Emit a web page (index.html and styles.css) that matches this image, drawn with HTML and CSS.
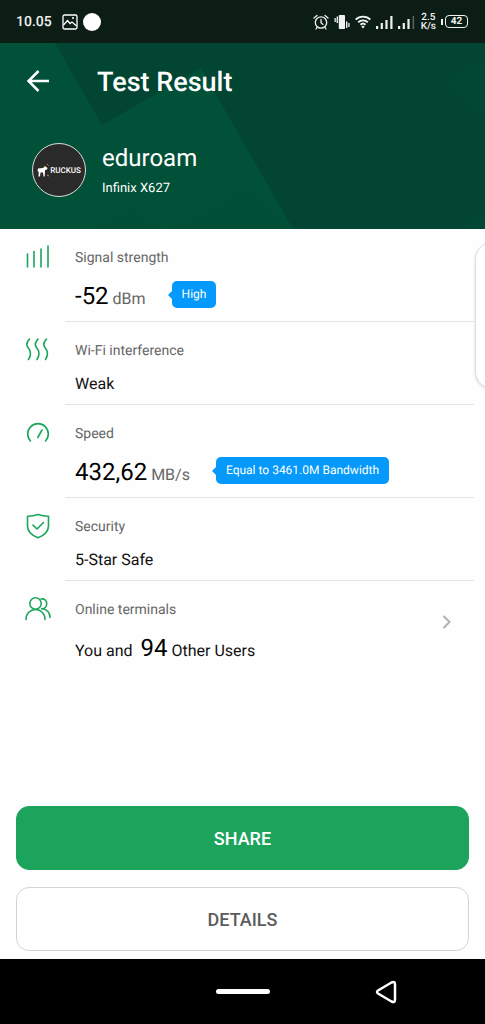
FILE: index.html
```html
<!DOCTYPE html>
<html lang="en">
<head>
<meta charset="utf-8">
<meta name="viewport" content="width=device-width, initial-scale=1">
<title>Test Result</title>
<link rel="stylesheet" href="styles.css">
</head>
<body>
<div class="app">
  <div class="status">
    <span class="clock">10.05</span>
    <svg class="pic" width="16" height="16" viewBox="0 0 16 16" fill="none" stroke="#fff"><rect x="1" y="1" width="14" height="14" rx="1.5" stroke-width="1.3"/><path d="M1.5 11 5.5 6.500l2.500 3 2-1.500 4.500 4" stroke-width="1.3"/><circle cx="11" cy="4" r="1" fill="#fff" stroke="none"/></svg>
    <span class="dot"></span>
    <span class="spacer"></span>
    <svg width="16" height="16" viewBox="0 0 16 16" fill="none" stroke="#f0f2f1" stroke-width="1.3" stroke-linecap="round"><circle cx="8" cy="8.500" r="5.700"/><path d="M8 5.500v3.300l2 1.600M1 4 4 1.500M15 4l-3-2.500M4 13.500 3 15M12 13.500l1 1.500"/></svg>
    <svg width="16" height="16" viewBox="0 0 16 16" fill="#f0f2f1"><rect x="4.800" y="1" width="6.200" height="14" rx=".8"/><path d="M2.600 2.500H4V9H2.600zM.5 4h1.300v4H.5zM12 7.500h1.400V14H12zM14.300 9h1.300v4h-1.300z"/></svg>
    <svg width="16" height="14" viewBox="0 0 16 14" fill="none" stroke="#f0f2f1" stroke-width="1.900"><path d="M.7 4.600a10.400 10.400 0 0 1 14.600 0M3.200 7.300a6.900 6.900 0 0 1 9.600 0M5.500 9.800a3.600 3.600 0 0 1 5 0"/><path d="m8 13.500-1.700-2a2.500 2.500 0 0 1 3.400 0z" fill="#f0f2f1" stroke="none"/></svg>
    <svg width="17" height="14" viewBox="0 0 17 14" fill="#f0f2f1"><path d="M0 11h2.200v3H0zM4.700 8h2.200v6H4.700zM9.400 5h2.200v9H9.400zM14.300 1h2.200v13h-2.200z"/></svg>
    <svg width="17" height="14" viewBox="0 0 17 14" fill="#f0f2f1"><path d="M0 11h2.200v3H0zM4.700 8h2.200v6H4.700zM9.400 4h2.200v10H9.400z"/><path d="M14.600 1h1.500v13h-1.500z" opacity=".35"/></svg>
    <span class="rate">2.5<br>K/s</span>
    <span class="battery"><span class="cell">42</span></span>
  </div>

  <header class="header">
    <svg class="facets" viewBox="0 0 485 186" preserveAspectRatio="none" aria-hidden="true">
      <path fill="#005137" d="M0 0h55l47 82 99-57 92 161H0z"/>
      <path fill="#004e36" d="m90 186 46-25 24 25zM165 186l85-45 43 45z" opacity=".6"/>
      <path fill="#014a35" d="m445 38 40-24v60zM455 186l30-18v18z" opacity=".6"/>
    </svg>
    <div class="titlebar">
      <button class="back" type="button" aria-label="Back"><svg width="24" height="24" viewBox="0 0 24 24" fill="none" stroke="#fff" stroke-width="2.500"><path d="M24 11H3.500M13.500 1l-10 10 10 10"/></svg></button>
      <h1>Test Result</h1>
    </div>
    <div class="network">
      <div class="logo">
        <svg width="12" height="13" viewBox="0 0 12 13"><path fill="#fff" d="M1 4.500 6 4l2-2 2.500 2-.5 1.500-2 .5-.3 6.500H6.500L6 8.500H3.500L3 12.500H1.500L1.700 8 .5 7z"/><path fill="none" stroke="#c98a2b" d="M10 0l1.500 1.500M10 11l2 1M8.500 2 7 3.500"/></svg>
        <span>RUCKUS</span>
      </div>
      <div>
        <div class="ssid">eduroam</div>
        <div class="device">Infinix X627</div>
      </div>
    </div>
  </header>

  <main class="results">
    <section class="row">
      <svg class="icon" width="26" height="26" viewBox="0 0 26 26"><path d="M2.500 10v13M9 7.500V23M16 5v18M23 2v21"/></svg>
      <div class="info">
        <h2>Signal strength</h2>
        <div class="value"><span><strong>-52</strong> <small>dBm</small></span><span class="tag">High</span></div>
      </div>
    </section>
    <section class="row">
      <svg class="icon" width="26" height="26" viewBox="0 0 26 26"><path d="M4.500 2C0 7 2 9.500 4 12s2 7-.5 10.500M13 2c-4.500 5-2.500 7.500-.5 10s2 7-.5 10.500M21.500 2c-4.500 5-2.500 7.500-.5 10s2 7-.5 10.500"/></svg>
      <div class="info">
        <h2>Wi-Fi interference</h2>
        <div class="value">Weak</div>
      </div>
    </section>
    <section class="row">
      <svg class="icon" width="26" height="26" viewBox="0 0 26 26"><path d="M5.500 21a10.300 10.300 0 1 1 15 0M17 10l-4.200 7.500"/></svg>
      <div class="info">
        <h2>Speed</h2>
        <div class="value"><span><strong>432,62</strong> <small>MB/s</small></span><span class="tag">Equal to 3461.0M Bandwidth</span></div>
      </div>
    </section>
    <section class="row">
      <svg class="icon" width="26" height="26" viewBox="0 0 26 26"><path d="M13 1.500c3 1 6.500 1.600 10.500 1.700V13c0 6-4.500 9.500-10.500 11.800C7 22.500 2.500 19 2.500 13V3.200C6.500 3.100 10 2.500 13 1.500zM8 12.200l4 3.800 6.500-6.500"/></svg>
      <div class="info">
        <h2>Security</h2>
        <div class="value">5-Star Safe</div>
      </div>
    </section>
    <section class="row">
      <svg class="icon" width="26" height="26" viewBox="0 0 26 26"><circle cx="10.500" cy="7.500" r="5.700"/><path d="M1 23.500c0-6 4.200-10 9.500-10s9.500 4 9.500 10M16 3c4-.8 5.700 2 5.700 4.700 0 3-2.200 5.100-5 5.100 5.300.7 8.300 4.200 8.300 8.700"/></svg>
      <div class="info">
        <h2>Online terminals</h2>
        <div class="value"><span>You and&nbsp; <strong>94</strong> Other Users</span></div>
      </div>
      <a class="more" href="#terminals" aria-label="Show online terminals"><svg width="10" height="16" viewBox="0 0 10 16" fill="none" stroke="#b0b0b0" stroke-width="2"><path d="m1.500 2 6 6-6 6"/></svg></a>
    </section>
    <div class="edge-panel"></div>
  </main>

  <div class="actions">
    <button class="btn primary" type="button">SHARE</button>
    <button class="btn" type="button">DETAILS</button>
  </div>

  <nav class="navbar">
    <button class="home" type="button" aria-label="Home"><span></span></button>
    <button class="prev" type="button" aria-label="System back"><svg width="24" height="26" viewBox="0 0 24 26" fill="none" stroke="#fff" stroke-width="2.500" stroke-linejoin="round"><path d="M3 11.500 16.500 3.500Q20 2 20 5v16q0 3-3.500 1.500L3 14.500q-2-1.500 0-3z"/></svg></button>
  </nav>
</div>
</body>
</html>
```
FILE: styles.css
```css
* { box-sizing: border-box; }

body {
  margin: 0;
  font-family: Roboto, "Liberation Sans", sans-serif;
  text-rendering: geometricPrecision;
  background: #fefefe;
  color: #111;
}

button {
  font: inherit;
  padding: 0;
  border: 0;
  background: none;
}

svg { display: block; flex: none; }

.app {
  display: flex;
  flex-direction: column;
  min-height: 100vh;
}

.status {
  display: flex;
  align-items: center;
  gap: 5px;
  height: 43px;
  padding: 0 17px 0 16px;
  background: #0c1d16;
  color: #f0f2f1;
}

.clock { font-size: 14px; font-weight: 500; margin-right: 5px; }
.dot { width: 18px; height: 18px; border-radius: 50%; background: #fff; }
.spacer { flex: 1; }
.rate { font-size: 10px; line-height: 9px; font-weight: 500; text-align: center; margin-left: 1px; }

.battery { display: flex; align-items: center; gap: 2px; }
.battery::before { content: ""; width: 2px; height: 6px; background: #f0f2f1; }

.cell {
  width: 23px;
  border: 1px solid #f0f2f1;
  border-radius: 4px;
  font-size: 10px;
  line-height: 11px;
  font-weight: 700;
  text-align: center;
}

.header {
  position: relative;
  padding: 19px 16px 31px 25px;
  background: #024532;
  color: #fff;
}

.facets { position: absolute; inset: 0; width: 100%; height: 100%; }
.titlebar, .network { position: relative; display: flex; align-items: center; }
.titlebar { gap: 48px; height: 40px; }

h1 { margin: 0; font-size: 27px; line-height: 40px; font-weight: 500; }

.network { gap: 16px; padding: 40px 0 0 7px; }

.logo {
  display: flex;
  align-items: center;
  justify-content: center;
  gap: 1px;
  width: 54px;
  height: 54px;
  border: 1px solid #ddd;
  border-radius: 50%;
  background: #2b2a2b;
  font-size: 8px;
  font-weight: 500;
}

.ssid { font-size: 24px; line-height: 32px; }
.device { font-size: 13px; line-height: 18px; margin-top: 6px; }

.results { position: relative; flex: 1; overflow: hidden; }
.row { display: flex; position: relative; padding-right: 11px; }

.icon {
  margin: 15px 14px 0 25px;
  fill: none;
  stroke: #1ca65b;
  stroke-width: 1.600;
  stroke-linecap: round;
  stroke-linejoin: round;
}

.info {
  flex: 1;
  padding: 19px 0 9px 10px;
  border-bottom: 1px solid #e4e4e4;
}

.row:last-of-type .info { border-bottom: 0; }

h2 {
  margin: 0 0 12px;
  font-size: 14px;
  line-height: 20px;
  font-weight: 400;
  color: #666;
}

.value { display: flex; align-items: center; font-size: 16px; line-height: 22px; }
.value strong { font-size: 24px; line-height: 32px; font-weight: 400; color: #000; }
.value small { font-size: 16px; color: #666; }

.tag {
  position: relative;
  margin: 0 0 4px 26px;
  padding: 0 10px;
  border-radius: 5px;
  background: #0499fa;
  color: #fff;
  font-size: 12px;
  line-height: 27px;
}

.tag::before {
  content: "";
  position: absolute;
  left: -4px;
  top: 10px;
  border: 4px solid transparent;
  border-left: 0;
  border-right-color: #0499fa;
}

.more { align-self: center; padding: 0 22px 10px 0; }

.edge-panel {
  position: absolute;
  top: 13px;
  right: -25px;
  width: 35px;
  height: 147px;
  border: 1px solid #ddd;
  border-radius: 20px;
  background: #fff;
  box-shadow: 0 1px 3px #0002;
}

.actions { display: grid; gap: 17px; padding: 0 16px 8px; }

.btn {
  height: 64px;
  border: 1px solid #d4d4d4;
  border-radius: 13px;
  background: #fff;
  color: #5c5c5c;
  font-size: 18px;
  font-weight: 500;
}

.primary { border-color: #1ca45c; background: #1ca45c; color: #fff; }

.navbar {
  display: grid;
  grid-template-columns: 1fr auto 1fr;
  align-items: center;
  height: 65px;
  background: #000;
}

.home { grid-column: 2; padding: 12px 0; }
.home span { display: block; width: 54px; height: 5px; border-radius: 3px; background: #fff; }
.prev { justify-self: center; padding-left: 20px; }
```
